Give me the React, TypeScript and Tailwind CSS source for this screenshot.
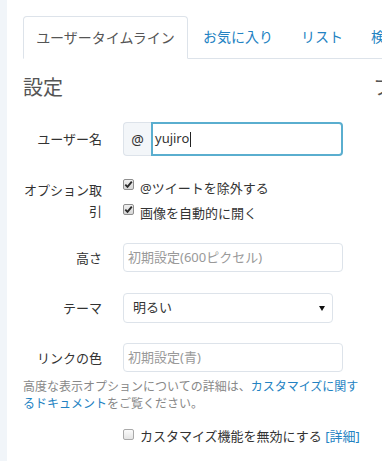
import { ReactNode } from "react";

const link = "text-[#2382c2]";

function Check({ checked }: { checked?: boolean }) {
  return (
    <span
      className={
        "mt-[3px] ml-[0px] flex h-[11px] w-[11px] shrink-0 items-center justify-center rounded-[2px] border " +
        (checked
          ? "border-[#8e8e8e] bg-gradient-to-b from-[#f0f0f0] to-[#d6d6d6]"
          : "border-[#a9a9a9] bg-gradient-to-b from-[#fbfbfb] to-[#e4e4e4]")
      }
    >
      {checked && (
        <svg width="9" height="9" viewBox="0 0 9 9">
          <path d="M1.3 4.6 L3.5 6.9 L7.8 1.6" fill="none" stroke="#2b2b2b" strokeWidth="1.9" />
        </svg>
      )}
    </span>
  );
}

function Row({ label, children, className }: { label: string; children: ReactNode; className: string }) {
  return (
    <div className={"flex items-center " + className}>
      <div className="w-[79px] shrink-0 text-right text-[13px] leading-[20px] text-[#333]">{label}</div>
      <div className="ml-[21px]">{children}</div>
    </div>
  );
}

export default function App() {
  return (
    <div className="flex h-[461px] w-[382px] overflow-hidden bg-white font-['Noto_Sans','Noto_Sans_CJK_JP',sans-serif] text-[#333]">
      <div className="w-[7px] shrink-0 bg-[#f1f5f9]" />

      <div className="min-w-0 flex-1 pl-[16px] pt-[16px]">
        {/* tabs */}
        <div className="flex w-[420px] border-b border-[#dde3ea] text-[14px] leading-[20px] whitespace-nowrap">
          <div className="-mb-px flex h-[43px] w-[165px] items-center justify-center rounded-t-[4px] border border-[#dde3ea] border-b-transparent bg-white text-[#555]">
            ユーザータイムライン
          </div>
          {["お気に入り", "リスト", "検索"].map((t) => (
            <div key={t} className={"ml-[2px] flex h-[42px] items-center border border-transparent px-[12px] " + link}>
              {t}
            </div>
          ))}
        </div>

        <div className="flex">
          {/* settings column */}
          <div className="w-[350px] shrink-0">
            <h2 className="mt-[15px] text-[20px] leading-[28px] text-[#555]">設定</h2>

            <Row label="ユーザー名" className="mt-[20px]">
              <div className="flex h-[34px] w-[220px]">
                <div className="flex w-[28px] items-center justify-center rounded-l-[4px] border border-r-0 border-[#dde3ea] bg-[#f3f6f9] text-[14px]">
                  @
                </div>
                <div className="flex flex-1 items-center rounded-r-[4px] border-2 border-[#5aaecf] pl-[2px] text-[13px]">
                  yujiro
                  <span className="ml-[1px] h-[15px] w-px bg-[#222]" />
                </div>
              </div>
            </Row>

            <div className="mt-[20px] flex items-start">
              <div className="w-[79px] shrink-0 pt-[4px] text-right text-[13px] leading-[21px]">オプション取引</div>
              <div className="ml-[21px] text-[13px] leading-[20px]">
                <div className="flex h-[25px] items-start">
                  <Check checked />
                  <span className="ml-[6px] mt-[2px]">@ツイートを除外する</span>
                </div>
                <div className="flex h-[25px] items-start">
                  <Check checked />
                  <span className="ml-[6px] mt-[2px]">画像を自動的に開く</span>
                </div>
              </div>
            </div>

            <Row label="高さ" className="mt-[17px]">
              <div className="flex h-[29px] w-[220px] items-center rounded-[4px] border border-[#dde3ea] pl-[4px] text-[13px] text-[#999]">
                初期設定(600ピクセル)
              </div>
            </Row>

            <Row label="テーマ" className="mt-[21px]">
              <div className="flex h-[30px] w-[210px] items-center justify-between rounded-[4px] border border-[#dde3ea] pl-[9px] pr-[7px] text-[13px]">
                明るい
                <svg width="6" height="5" viewBox="0 0 6 5">
                  <path d="M0 0 H6 L3 5 Z" fill="#111" />
                </svg>
              </div>
            </Row>

            <Row label="リンクの色" className="mt-[20px]">
              <div className="flex h-[29px] w-[220px] items-center rounded-[4px] border border-[#dde3ea] pl-[4px] text-[13px] text-[#999]">
                初期設定(青)
              </div>
            </Row>

            <p className="mt-[6px] w-[343px] text-[12px] leading-[17px] text-[#888]">
              高度な表示オプションについての詳細は、
              <span className={link}>カスタマイズに関するドキュメント</span>
              をご覧ください。
            </p>

            <div className="ml-[100px] mt-[14px] flex items-start text-[13px] leading-[20px] whitespace-nowrap">
              <Check />
              <span className="ml-[6px]">
                カスタマイズ機能を無効にする <span className={link}>[詳細]</span>
              </span>
            </div>
          </div>

          {/* next column, cut off at the window edge */}
          <div className="shrink-0">
            <h2 className="mt-[15px] whitespace-nowrap text-[20px] leading-[28px] text-[#555]">フィルター</h2>
          </div>
        </div>
      </div>
    </div>
  );
}
